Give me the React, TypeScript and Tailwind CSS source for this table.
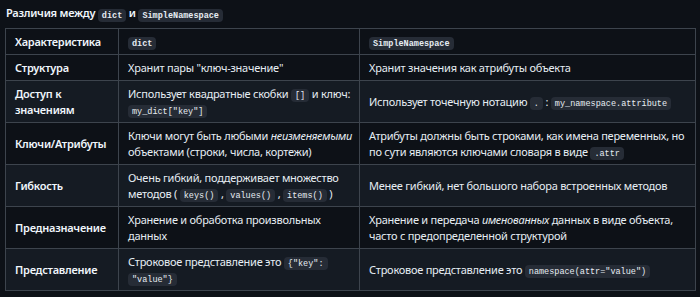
import type { ReactNode } from 'react';

function Code({ children, bold = false }: { children: ReactNode; bold?: boolean }) {
  return (
    <code
      className={`rounded-[4px] bg-[#262c36] px-[4px] py-[1.5px] font-['Liberation_Mono',monospace] text-[8.5px] leading-none tracking-normal text-[#e6edf3] ${
        bold ? 'font-bold' : ''
      }`}
    >
      {children}
    </code>
  );
}

interface Row {
  label: ReactNode;
  dict: ReactNode;
  ns: ReactNode;
}

// line breaks follow the reference wrapping
const ROWS: Row[] = [
  {
    label: 'Структура',
    dict: 'Хранит пары "ключ-значение"',
    ns: 'Хранит значения как атрибуты объекта',
  },
  {
    label: 'Доступ к значениям',
    dict: (
      <>
        Использует квадратные скобки <Code>[]</Code> и ключ:
        <br />
        <Code>my_dict["key"]</Code>
      </>
    ),
    ns: (
      <>
        Использует точечную нотацию <Code>.</Code> : <Code>my_namespace.attribute</Code>
      </>
    ),
  },
  {
    label: 'Ключи/Атрибуты',
    dict: (
      <>
        Ключи могут быть любыми <em>неизменяемыми</em>
        <br />
        объектами (строки, числа, кортежи)
      </>
    ),
    ns: (
      <>
        Атрибуты должны быть строками, как имена переменных, но
        <br />
        по сути являются ключами словаря в виде <Code>.attr</Code>
      </>
    ),
  },
  {
    label: 'Гибкость',
    dict: (
      <>
        Очень гибкий, поддерживает множество
        <br />
        методов ( <Code>keys()</Code> , <Code>values()</Code> , <Code>items()</Code> )
      </>
    ),
    ns: 'Менее гибкий, нет большого набора встроенных методов',
  },
  {
    label: 'Предназначение',
    dict: (
      <>
        Хранение и обработка произвольных
        <br />
        данных
      </>
    ),
    ns: (
      <>
        Хранение и передача <em>именованных</em> данных в виде объекта,
        <br />
        часто с предопределенной структурой
      </>
    ),
  },
  {
    label: 'Представление',
    dict: (
      <>
        Строковое представление это <Code>{'{"key":'}</Code>
        <br />
        <Code>{'"value"}'}</Code>
      </>
    ),
    ns: (
      <>
        Строковое представление это <Code>namespace(attr="value")</Code>
      </>
    ),
  },
];

const cell = 'border border-[#3d444d] px-[9px] py-[4.5px] align-middle';

export default function App() {
  return (
    <div className="h-[297px] w-[700px] bg-[#0d1117] pl-[5px] pt-[5px] font-['Noto_Sans',sans-serif] text-[11px] leading-[16px] tracking-[-0.25px] text-[#e6edf3]">
      <p className="mb-[7px] pl-[1px] font-semibold leading-[16px] text-[#f0f6fc]">
        Различия между <Code bold>dict</Code> и <Code bold>SimpleNamespace</Code>
      </p>
      <table className="w-[690px] table-fixed border-collapse">
        <colgroup>
          <col className="w-[113px]" />
          <col className="w-[241px]" />
          <col className="w-[336px]" />
        </colgroup>
        <thead>
          <tr>
            <th className={`${cell} text-left font-semibold text-[#f0f6fc]`}>Характеристика</th>
            <th className={`${cell} text-left font-semibold`}>
              <Code bold>dict</Code>
            </th>
            <th className={`${cell} text-left font-semibold`}>
              <Code bold>SimpleNamespace</Code>
            </th>
          </tr>
        </thead>
        <tbody>
          {ROWS.map((row, i) => (
            <tr key={i} className={i % 2 === 1 ? 'bg-[#151b23]' : 'bg-[#0d1117]'}>
              <td className={`${cell} font-semibold text-[#f0f6fc]`}>{row.label}</td>
              <td className={`${cell} whitespace-nowrap`}>{row.dict}</td>
              <td className={`${cell} whitespace-nowrap`}>{row.ns}</td>
            </tr>
          ))}
        </tbody>
      </table>
    </div>
  );
}
